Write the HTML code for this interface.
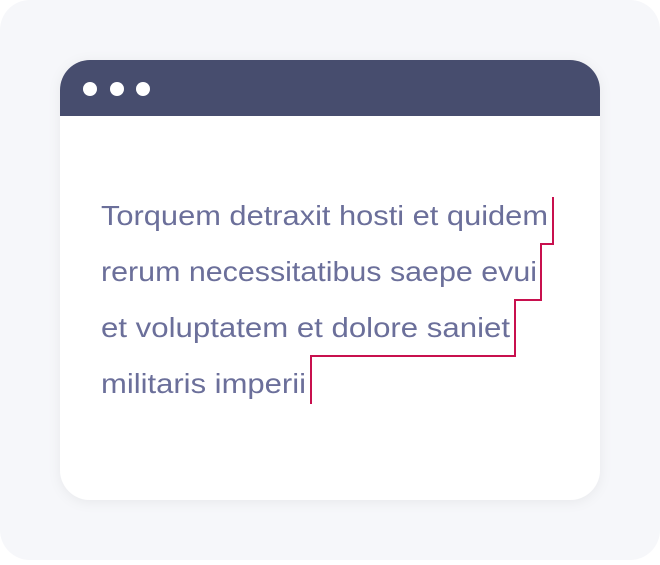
<!DOCTYPE html>
<html><head><style>
html,body{margin:0;padding:0;background:#fff;}
</style></head><body>
<svg width="660" height="560" xmlns="http://www.w3.org/2000/svg">
<defs><filter id="s" x="-10%" y="-10%" width="120%" height="120%"><feDropShadow dx="0" dy="2" stdDeviation="6" flood-color="#000" flood-opacity="0.06"/></filter></defs>
<rect x="0" y="0" width="660" height="560" rx="30" fill="#f6f7fa"/>
<g filter="url(#s)">
<rect x="60" y="60" width="540" height="440" rx="30" fill="#fff"/>
</g>
<path d="M60 116 V90 A30 30 0 0 1 90 60 H570 A30 30 0 0 1 600 90 V116 Z" fill="#474d6e"/>
<circle cx="90" cy="89" r="7" fill="#fff"/>
<circle cx="117" cy="89" r="7" fill="#fff"/>
<circle cx="143" cy="89" r="7" fill="#fff"/>
<g font-family="Liberation Sans, sans-serif" font-size="28" fill="#6b6f9a" lengthAdjust="spacingAndGlyphs">
<text x="101" y="225" textLength="447" lengthAdjust="spacingAndGlyphs">Torquem detraxit hosti et quidem</text>
<text x="101" y="281" textLength="436" lengthAdjust="spacingAndGlyphs">rerum necessitatibus saepe evui</text>
<text x="101" y="337" textLength="409" lengthAdjust="spacingAndGlyphs">et voluptatem et dolore saniet</text>
<text x="101" y="393" textLength="205" lengthAdjust="spacingAndGlyphs">militaris imperii</text>
</g>
<path d="M553 197 V244 H541 V300 H515 V356 H311 V404" fill="none" stroke="#c8104e" stroke-width="2"/>
</svg>
</body></html>
